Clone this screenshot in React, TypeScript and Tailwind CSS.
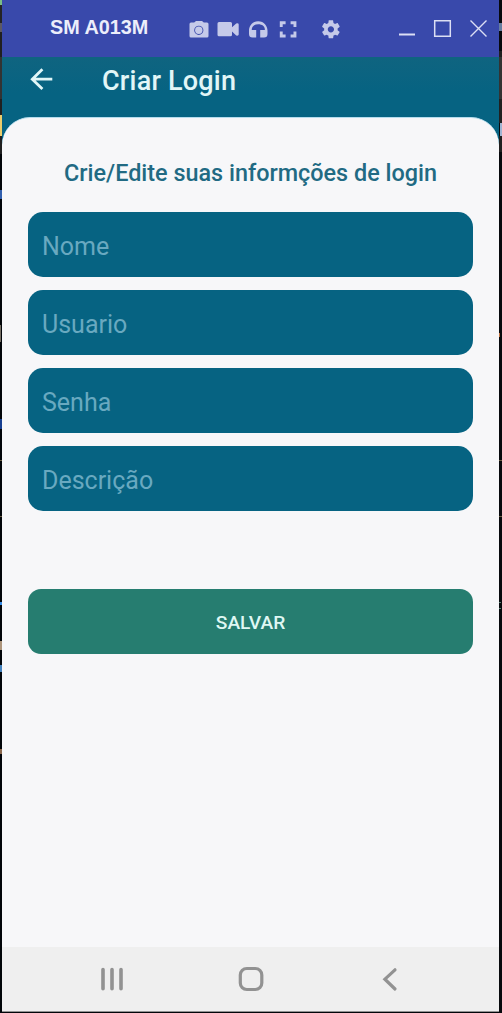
import React from "react";

const fields = ["Nome", "Usuario", "Senha", "Descrição"];

function TitleBar() {
  return (
    <div className="flex h-[57px] shrink-0 items-start bg-[#3949ab] text-[#c5cae9]">
      <span className="ml-12 mt-[12px] w-[139px] whitespace-nowrap font-['Liberation_Sans',Arial,sans-serif] text-[20px] font-bold leading-[30px] text-[#eceefa]">
        <span className="inline-block origin-left scale-x-[0.99]">SM A013M</span>
      </span>
      <svg className="mt-[17px] h-6 w-[152px] shrink-0" viewBox="189 17 152 24" fill="currentColor">
        <path fillRule="evenodd" d="M191 22.5h3.2l1.8-1.6h6l1.8 1.6h3.2q1.5 0 1.5 1.5v12q0 1.5-1.5 1.5h-16q-1.5 0-1.5-1.5V24q0-1.5 1.5-1.5zM198.800 25.700a4.600 4.600 0 1 0 0 9.200 4.600 4.600 0 0 0 0-9.200z" />
        <circle cx="198.800" cy="30.300" r="3.700" />
        <path d="M219 22h11.500q1.500 0 1.500 1.500v3.800l4.200-3.900q2.500-.5 2.500 1v10.200q0 1.500-2.500 1L232 31.500v3.200q0 1.500-1.500 1.500H219q-1.500 0-1.500-1.500V23.500q0-1.500 1.500-1.500z" />
        <path d="M249 30.500c0-4.500 3.300-9.300 9.200-9.300s9.300 4.800 9.300 9.300V34q0 3.500-3.500 3.500h-3.800v-7.600h4.700c0-3.600-2.700-5.700-6.700-5.700s-6.500 2.100-6.500 5.700h4.500v7.600h-3.700q-3.500 0-3.500-3.500z" />
        <path d="M279.800 21.200h5.800v3h-2.900v2.900h-2.900zM290.600 21.200h5.800v5.900h-2.900v-2.900h-2.900zM279.800 31.500h2.900v2.900h2.900v3h-5.800zM293.500 31.500h2.900v5.900h-5.800v-3h2.900z" />
        <path transform="translate(320.100 18.500) scale(.9)" d="M19.430 12.980c.04-.32.070-.64.070-.98s-.03-.66-.07-.98l2.110-1.650c.19-.15.240-.42.120-.64l-2-3.460c-.12-.22-.39-.3-.61-.22l-2.490 1c-.52-.4-1.080-.73-1.690-.98l-.38-2.650C14.460 2.180 14.250 2 14 2h-4c-.25 0-.46.180-.49.420l-.38 2.650c-.61.250-1.170.590-1.690.980l-2.490-1c-.23-.09-.49 0-.61.220l-2 3.460c-.13.220-.07.490.12.640l2.110 1.650c-.04.320-.07.650-.07.980s.03.660.07.980l-2.110 1.650c-.19.150-.24.420-.12.640l2 3.460c.12.220.39.300.61.220l2.490-1c.52.400 1.080.730 1.690.980l.38 2.650c.03.240.24.420.49.420h4c.25 0 .46-.18.490-.42l.38-2.650c.61-.25 1.170-.59 1.690-.98l2.490 1c.23.090.49 0 .61-.22l2-3.460c.12-.22.070-.49-.12-.64l-2.110-1.650zM12 15.500c-1.930 0-3.500-1.570-3.500-3.500s1.570-3.500 3.500-3.500 3.500 1.570 3.500 3.500-1.570 3.500-3.500 3.500z" />
      </svg>
      <svg className="ml-[57px] mt-[17px] h-6 w-[91px] shrink-0" viewBox="398 17 91 24" fill="none" stroke="#dcdff4">
        <path strokeWidth="2" d="M399 34.500h16" />
        <path strokeWidth="1.500" d="M434.700 20.700h15.600v15.600h-15.600z" />
        <path strokeWidth="1.400" d="M470.500 20.500l16 16m0-16l-16 16" />
      </svg>
    </div>
  );
}

function AppHeader() {
  return (
    <header className="flex h-[60px] items-start bg-linear-to-b from-[#0f6480] to-[#066382] to-60%">
      <svg className="ml-[27px] mt-[10px] h-6 w-6 shrink-0" viewBox="0 0 24 24" fill="none" stroke="#e2f6f7" strokeWidth="2.800">
        <path d="M23.300 12.200H3M13.400 2.200L3.300 12.200 13.400 22" />
      </svg>
      <h1 className="ml-[49px] mt-[8px] whitespace-nowrap text-[27px] font-medium leading-[32px] tracking-[0.2px] text-[#e2f6f7]">Criar Login</h1>
    </header>
  );
}

function NavigationBar() {
  return (
    <nav className="flex h-[65px] shrink-0 items-center border-b border-[#929292] bg-[#efefef] pl-[95px] text-[#929292]">
      <svg className="h-8 w-8" viewBox="0 0 32 32" fill="none" stroke="currentColor" strokeWidth="3.600" strokeLinecap="round">
        <path d="M6 6.500v19.200M15 6.500v19.200M24 6.500v19.200" />
      </svg>
      <svg className="ml-[106px] h-8 w-8" viewBox="0 0 32 32" fill="none" stroke="currentColor" strokeWidth="3.200">
        <rect x="5.300" y="5.500" width="21.500" height="21" rx="6.500" />
      </svg>
      <svg className="ml-[107px] h-8 w-8" viewBox="0 0 32 32" fill="none" stroke="currentColor" strokeWidth="3.200" strokeLinecap="round">
        <path d="M21 6.800L10.900 16.200l10.100 9.800" />
      </svg>
    </nav>
  );
}

function LeftEdge() {
  return (
    <div className="flex h-full w-[2px] shrink-0 flex-col bg-[#020509]">
      <div className="h-[5px] shrink-0 bg-[#79bc86]" />
      <div className="h-[18px] shrink-0 bg-[#242424]" />
      <div className="h-[9px] shrink-0 bg-[#5d5963]" />
      <div className="h-[25px] shrink-0 bg-[#202020]" />
      <div className="h-[42px] shrink-0 bg-[#333333]" />
      <div className="h-[16px] shrink-0 bg-[#202020]" />
      <div className="h-[21px] shrink-0 bg-[#eccd6c]" />
      <div className="h-[18px] shrink-0 bg-[#202020]" />
      <div className="mt-[36px] h-[9px] shrink-0 bg-[#315fae]" />
      <div className="mt-[126px] h-[17px] w-px shrink-0 bg-[#746d63]" />
      <div className="mt-[77px] h-[10px] shrink-0 bg-[#173f91]" />
      <div className="mt-[31px] h-px shrink-0 bg-[#695d43]" />
      <div className="mt-[55px] h-px shrink-0 bg-[#695d43]" />
      <div className="mt-[85px] h-[3px] shrink-0 bg-[#348ae5]" />
      <div className="mt-[36px] h-[9px] shrink-0 bg-[#ad957c]" />
      <div className="mt-[15px] h-[7px] shrink-0 bg-[#4482bd]" />
      <div className="mt-[77px] h-[5px] shrink-0 bg-[#8a674c]" />
    </div>
  );
}

function RightEdge() {
  return (
    <div className="flex h-full w-[3px] shrink-0 flex-col bg-[#07090d]">
      <div className="mt-[23px] h-[8px] shrink-0 bg-[#667da0]" />
      <div className="mt-[20px] h-[6px] shrink-0 bg-[#202020]" />
      <div className="h-[42px] shrink-0 bg-[#333333]" />
      <div className="h-[24px] shrink-0 bg-[#202020]" />
      <div className="ml-px h-[13px] shrink-0 bg-[#9fb4d2]" />
      <div className="h-[16px] shrink-0 bg-[#202020]" />
      <div className="mt-[181px] h-[4px] w-px shrink-0 bg-[#bd703e]" />
      <div className="mt-[123px] h-px shrink-0 bg-[#695d43]" />
      <div className="mt-[55px] h-px shrink-0 bg-[#695d43]" />
      <div className="mt-[85px] h-px w-[2px] shrink-0 bg-[#5a8277]" />
      <div className="mt-[5px] h-px w-[2px] shrink-0 bg-[#5a8277]" />
    </div>
  );
}

export default function App() {
  return (
    <div className="flex h-[1013px] w-[502px] overflow-hidden bg-[#020509] font-[Roboto,sans-serif]">
      <LeftEdge />
      <main className="flex h-[1012px] w-[497px] shrink-0 flex-col">
        <TitleBar />
        <section className="flex min-h-0 flex-1 flex-col bg-[#066382]">
          <AppHeader />
          <div className="flex-1 rounded-t-[28px] border-t border-[#b5dced] bg-[#f7f7f9] px-[26px]">
            <h2 className="mt-[39px] text-center text-[23.4px] font-medium leading-[32px] text-[#216a83]">
              <span className="whitespace-nowrap">Crie/Edite suas informções de login</span>
            </h2>
            <form className="mt-[23.4px] flex w-[445px] flex-col gap-[13px]" onSubmit={(e) => e.preventDefault()}>
              {fields.map((name) => (
                <input
                  key={name}
                  aria-label={name}
                  placeholder={name}
                  className="h-[65px] rounded-[15px] bg-[#066382] px-[14px] pt-[3px] text-[25px] text-white outline-none placeholder:text-[#69a9c0]"
                />
              ))}
              <button className="mt-[65px] h-[65px] rounded-[13px] bg-[#267d70] pt-[3px] text-[19.2px] font-medium text-[#dff7f3]">
                SALVAR
              </button>
            </form>
          </div>
        </section>
        <NavigationBar />
      </main>
      <RightEdge />
    </div>
  );
}
